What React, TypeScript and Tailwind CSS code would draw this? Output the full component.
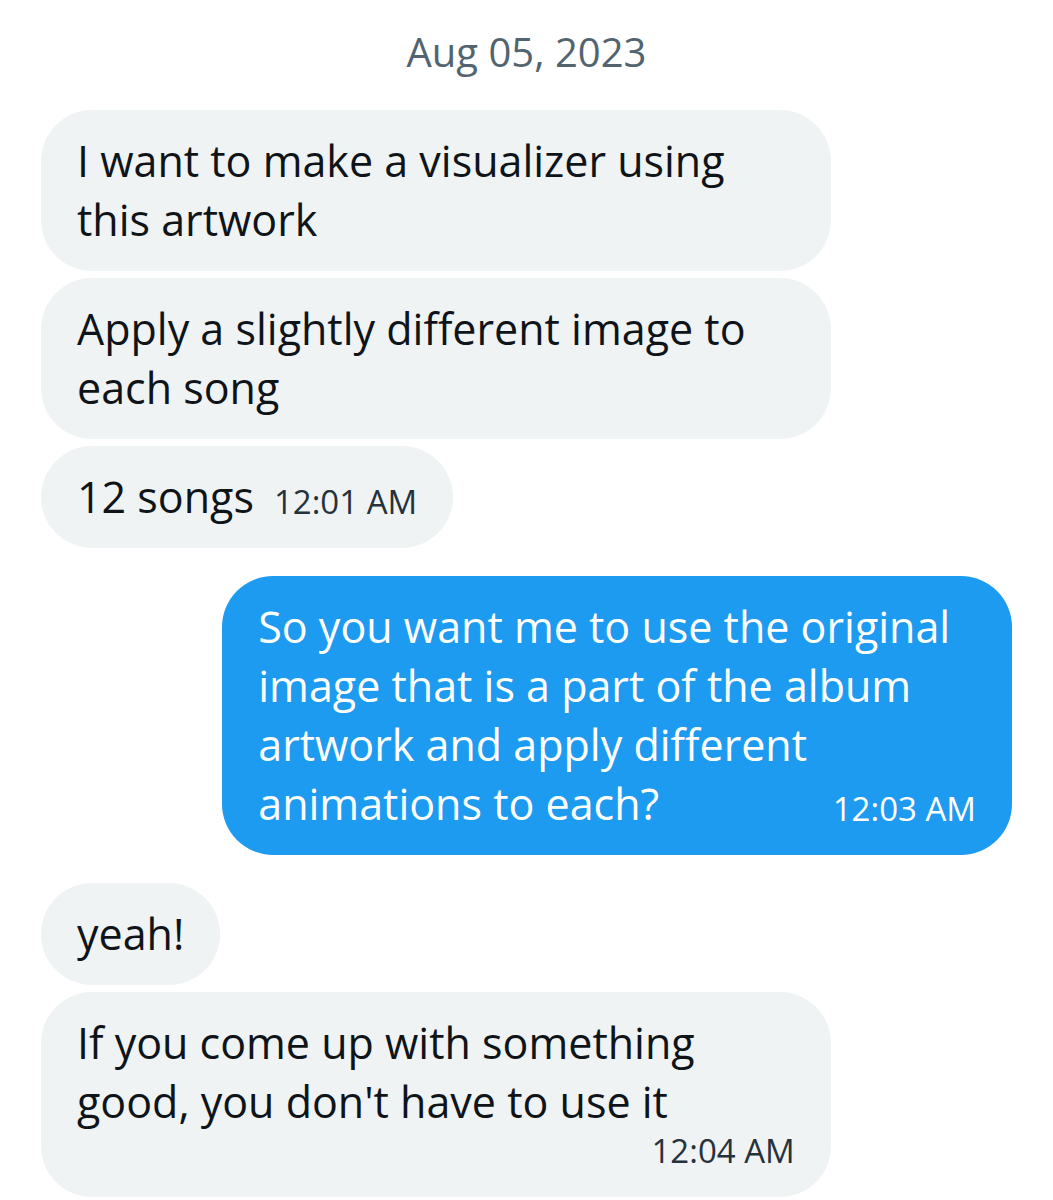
type Message = {
    text: string
    mine?: boolean
    time?: string
    timeBelow?: boolean
}

const groups: Message[][] = [
    [
        { text: 'I want to make a visualizer using this artwork' },
        { text: 'Apply a slightly different image to each song' },
        { text: '12 songs', time: '12:01 AM' },
    ],
    [
        { text: 'So you want me to use the original image that is a part of the album artwork and apply different animations to each?', time: '12:03 AM', mine: true },
    ],
    [
        { text: 'yeah!' },
        { text: "If you come up with something good, you don't have to use it", time: '12:04 AM', timeBelow: true },
    ],
]

function Bubble({ message }: { message: Message }) {
    const { text, time, mine, timeBelow } = message
    const color = mine ? 'self-end bg-[#1d9bf0] text-white' : 'self-start bg-[#eff3f4] text-[#0f1419]'
    const timeColor = mine ? 'text-white' : 'text-[#26323b]'

    return (
        <li className={`max-w-[75vw] rounded-[51px] px-9 pt-[21px] pb-[22px] ${color}`}>
            {/* the floated time shares the last line when there is room for it */}
            <p className="flow-root text-[43px] leading-[59px]">
                {text}
                {time && (
                    <time className={`float-right mb-1 ml-5 text-[33px] leading-10 ${timeBelow ? '' : 'mt-[15px]'} ${timeColor}`}>{time}</time>
                )}
            </p>
        </li>
    )
}

export default function App() {
    return (
        <main className="min-h-screen bg-white px-[41px] font-['Open_Sans','Liberation_Sans',sans-serif] [font-variant-ligatures:none]">
            <h1 className="pt-6 pb-[30px] text-center text-[40px] leading-[56px] text-[#536471]">Aug 05, 2023</h1>
            <div className="flex flex-col gap-7">
                {groups.map((group, i) => (
                    <ul key={i} className="flex flex-col gap-[7px]">
                        {group.map((message) => (
                            <Bubble key={message.text} message={message} />
                        ))}
                    </ul>
                ))}
            </div>
        </main>
    )
}
